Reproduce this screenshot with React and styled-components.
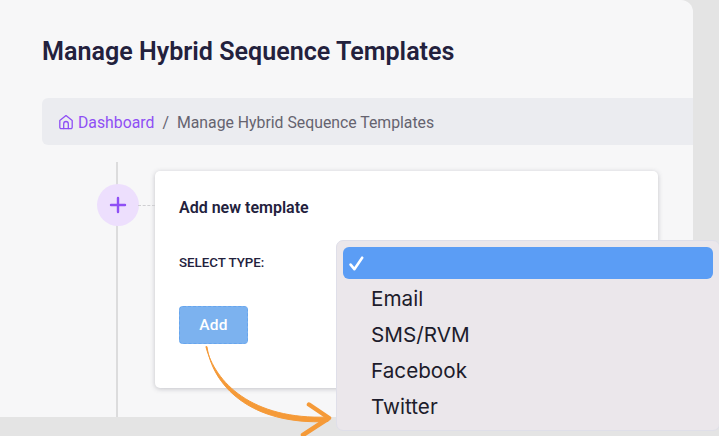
import React from 'react';
import styled, { createGlobalStyle } from 'styled-components';

const Global = createGlobalStyle`
  html, body { margin: 0; padding: 0; background: #e4e4e4; }
  body { font-family: Roboto, "Liberation Sans", sans-serif; }
`;

const Page = styled.div`
  position: relative;
  width: 719px;
  height: 436px;
  overflow: hidden;
  background: #e4e4e4;
`;

const Panel = styled.main`
  box-sizing: border-box;
  width: 693px;
  height: 417px;
  padding: 37px 0 0 42px;
  display: flex;
  flex-direction: column;
  background: #f7f7f8;
  border-top-right-radius: 12px;
  overflow: hidden;
`;

const Title = styled.h1`
  margin: 0;
  font-size: 25.100px;
  line-height: 30px;
  font-weight: 600;
  letter-spacing: 0;
  color: #23213d;
`;

const Breadcrumb = styled.nav`
  box-sizing: border-box;
  display: flex;
  align-items: center;
  height: 47px;
  margin-top: 31px;
  padding: 1px 0 0 16px;
  background: #ebecf0;
  border-radius: 6px 0 0 6px;
  font-size: 15.800px;
  color: #65636f;
`;

const Crumb = styled.a`
  display: flex;
  align-items: center;
  gap: 4px;
  color: #8f4ff5;
`;

const Separator = styled.span`
  margin: 0 8px;
`;

const Timeline = styled.section`
  flex: 1;
  display: flex;
  margin-top: 17px;
  min-height: 0;
`;

const Rail = styled.div`
  position: relative;
  width: 113px;
  flex: none;
  &::before {
    content: '';
    position: absolute;
    left: 74px;
    top: 0;
    bottom: 0;
    width: 2px;
    background: #dcdcdd;
  }
`;

const Connector = styled.span`
  position: absolute;
  left: 96px;
  top: 43px;
  width: 17px;
  border-top: 1px dashed #cfcfd2;
`;

const AddCircle = styled.button`
  position: absolute;
  left: 55px;
  top: 22px;
  width: 42px;
  height: 42px;
  padding: 0;
  display: flex;
  align-items: center;
  justify-content: center;
  border: 0;
  border-radius: 50%;
  background: #eddffd;
  color: #8f4ff5;
`;

const Card = styled.article`
  box-sizing: border-box;
  width: 503px;
  height: 217px;
  margin-top: 9px;
  padding: 28px 24px;
  background: #fff;
  border-radius: 5px;
  box-shadow: 0 1px 5px rgba(60, 60, 80, 0.28);
`;

const CardTitle = styled.h2`
  margin: 0;
  font-size: 16px;
  line-height: 18px;
  font-weight: 600;
  color: #23213d;
`;

const FieldLabel = styled.label`
  display: block;
  margin-top: 38px;
  font-size: 13.300px;
  line-height: 15px;
  font-weight: 500;
  color: #23213d;
`;

const AddButton = styled.button`
  display: block;
  box-sizing: border-box;
  width: 69px;
  height: 38px;
  margin-top: 36px;
  padding: 0;
  background: #7cb2ef;
  border: 1px dashed #66a5ee;
  border-radius: 4px;
  color: #fff;
  font-family: inherit;
  font-size: 15.500px;
  font-weight: 500;
  letter-spacing: 0.3px;
`;

const Menu = styled.ul`
  position: absolute;
  left: 336px;
  top: 240px;
  box-sizing: border-box;
  width: 384px;
  height: 191px;
  margin: 0;
  padding: 6px 6px;
  list-style: none;
  background: #ebe7eb;
  border: 1px solid #dfdfe9;
  border-radius: 7px;
  font-family: Inter, sans-serif;
`;

const Option = styled.li`
  box-sizing: border-box;
  display: flex;
  align-items: center;
  width: 370px;
  height: ${(p) => (p.$selected ? '32px' : '36px')};
  margin-bottom: ${(p) => (p.$selected ? '1px' : '0')};
  padding-left: ${(p) => (p.$selected ? '6px' : '28px')};
  background: ${(p) => (p.$selected ? '#5b9df5' : 'transparent')};
  border-radius: 6px;
  color: #1d1c2b;
  font-size: 20.700px;
`;

const Arrow = styled.svg`
  position: absolute;
  left: 200px;
  top: 340px;
`;

const HomeIcon = () => (
  <svg width="16" height="16" viewBox="0 0 16 16" fill="none" stroke="currentColor" strokeWidth="1.3" strokeLinejoin="round" strokeLinecap="round">
    <path d="M1.8 6.600 8 1.600l6.200 5v6.600a1.400 1.400 0 0 1-1.400 1.400H3.200a1.400 1.400 0 0 1-1.400-1.400z" />
    <path d="M5.700 14.600V9.800a2.300 2.300 0 0 1 4.600 0v4.800" />
  </svg>
);

export default function App() {
  return (
    <Page>
      <Global />
      <Panel>
        <Title>Manage Hybrid Sequence Templates</Title>
        <Breadcrumb>
          <Crumb><HomeIcon />Dashboard</Crumb>
          <Separator>/</Separator>
          <span>Manage Hybrid Sequence Templates</span>
        </Breadcrumb>
        <Timeline>
          <Rail>
            <AddCircle aria-label="Add">
              <svg width="18" height="18" viewBox="0 0 18 18" stroke="currentColor" strokeWidth="2.400" strokeLinecap="round">
                <path d="M9 2v14M2 9h14" />
              </svg>
            </AddCircle>
            <Connector />
          </Rail>
          <Card>
            <CardTitle>Add new template</CardTitle>
            <FieldLabel>SELECT TYPE:</FieldLabel>
            <AddButton>Add</AddButton>
          </Card>
        </Timeline>
      </Panel>
      <Menu>
        <Option $selected>
          <svg width="15" height="15" viewBox="0 0 14 14" fill="none" stroke="#fff" strokeWidth="2.400" strokeLinecap="round" strokeLinejoin="round">
            <path d="M1.500 8 5 12.300 12.300 1.600" />
          </svg>
        </Option>
        <Option>Email</Option>
        <Option>SMS/RVM</Option>
        <Option>Facebook</Option>
        <Option>Twitter</Option>
      </Menu>
      <Arrow width="135" height="96" viewBox="0 0 135 96" fill="none" stroke="#f59a38" strokeLinecap="round" strokeLinejoin="round">
        <path d="M6 7C15 42.500 52 80 128 77L128 81.500C49 85.500 12.500 44.500 7 7Z" fill="#f59a38" strokeWidth="1" />
        <path d="M109 64.500 129 78 103 95" strokeWidth="4.500" />
      </Arrow>
    </Page>
  );
}
